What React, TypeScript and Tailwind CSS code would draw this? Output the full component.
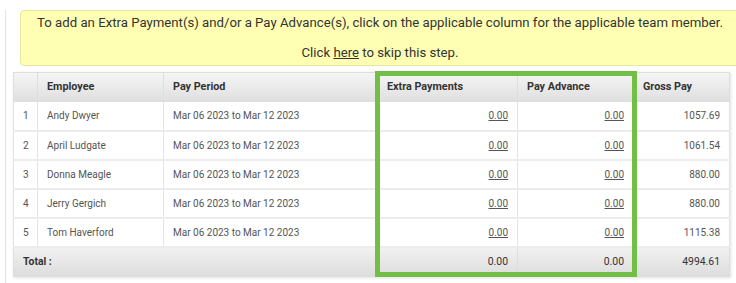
import React from 'react'

type Row = { name: string; gross: string }

const rows: Row[] = [
  { name: 'Andy Dwyer', gross: '1057.69' },
  { name: 'April Ludgate', gross: '1061.54' },
  { name: 'Donna Meagle', gross: '880.00' },
  { name: 'Jerry Gergich', gross: '880.00' },
  { name: 'Tom Haverford', gross: '1115.38' },
]

const period = 'Mar 06 2023 to Mar 12 2023'

const cell = 'border-x border-[#e3e3e3] border-b-2 border-b-[#ececec] px-[9px]'
const head = 'border border-[#dedede] px-[9px] font-bold'
const foot = 'border border-[#dedede] px-[9px]'

export default function App() {
  return (
    <div className="w-[736px] h-[283px] bg-white overflow-hidden font-['Roboto',sans-serif]">
      <div className="ml-[5px] h-[279px] border-l border-[#e2e2e2]">
        {/* notice */}
        <div className="ml-[14px] mt-[10px] w-[720px] h-[56px] rounded-l-[4px] border border-[#e6e69c] bg-[#ffffb4] text-center text-[13.2px] text-[#333]">
          <p className="leading-[22px] mt-[1px]">
            To add an Extra Payment(s) and/or a Pay Advance(s), click on the applicable column for the applicable team member.
          </p>
          <p className="leading-[22px] mt-[8px]">
            Click <a className="underline">here</a> to skip this step.
          </p>
        </div>

        <div className="relative ml-[7px] mt-[6px] w-[716px]">
          <table className="w-[716px] table-fixed border-collapse text-[10px] text-[#555] shadow-[1px_1px_3px_rgba(0,0,0,0.12)]">
            <colgroup>
              <col className="w-[24px]" />
              <col className="w-[126px]" />
              <col className="w-[214px]" />
              <col className="w-[140px]" />
              <col className="w-[116px]" />
              <col className="w-[96px]" />
            </colgroup>
            <thead>
              <tr className="h-[29px] bg-gradient-to-b from-[#f5f5f5] to-[#dfdfdf] text-left text-[10.8px] text-[#333]">
                <th className="border border-[#dedede]"></th>
                <th className={head}>Employee</th>
                <th className={head}>Pay Period</th>
                <th className={head}>Extra Payments</th>
                <th className={head}>Pay Advance</th>
                <th className={head}>Gross Pay</th>
              </tr>
            </thead>
            <tbody>
              {rows.map((r, i) => (
                <tr key={r.name} className="h-[29px] bg-white">
                  <td className={cell}>{i + 1}</td>
                  <td className={cell}>{r.name}</td>
                  <td className={cell}>{period}</td>
                  <td className={`${cell} text-right`}>
                    <a className="underline">0.00</a>
                  </td>
                  <td className={`${cell} text-right`}>
                    <a className="underline">0.00</a>
                  </td>
                  <td className={`${cell} text-right`}>{r.gross}</td>
                </tr>
              ))}
            </tbody>
            <tfoot>
              <tr className="h-[30px] bg-gradient-to-b from-[#f2f2f2] to-[#dcdcdc] text-[10.4px] text-[#333]">
                <td colSpan={3} className={`${foot} font-bold`}>Total :</td>
                <td className={`${foot} text-right`}>0.00</td>
                <td className={`${foot} text-right`}>0.00</td>
                <td className={`${foot} text-right`}>4994.61</td>
              </tr>
            </tfoot>
          </table>

          {/* highlight around the editable columns */}
          <div className="absolute left-[362px] top-[-1px] w-[262px] h-[206px] border-[5px] border-[#71bf46] pointer-events-none" />
        </div>
      </div>
    </div>
  )
}
